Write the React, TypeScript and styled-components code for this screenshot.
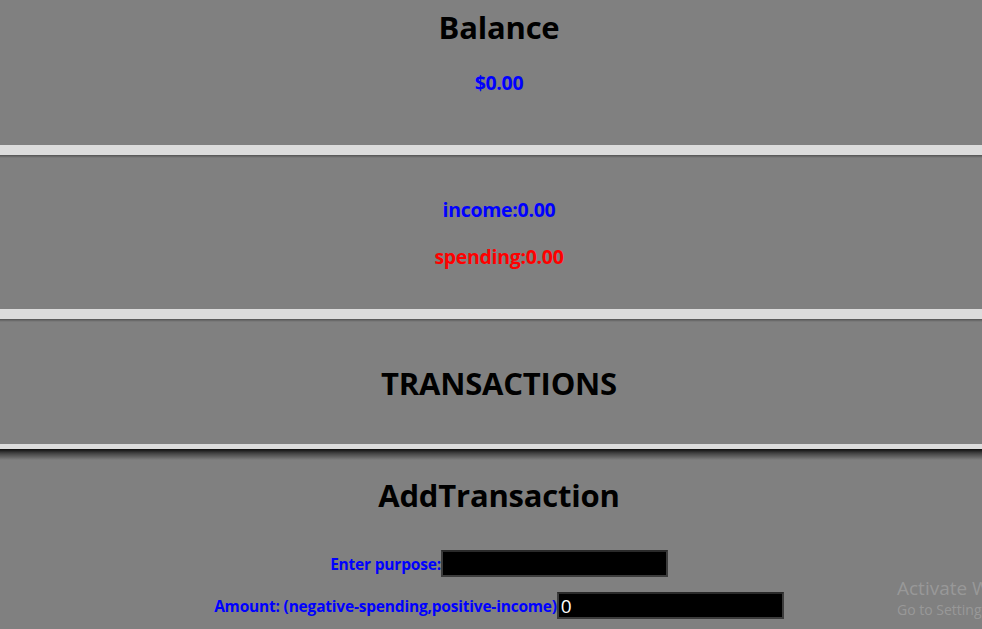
import React from "react";
import styled, { createGlobalStyle } from "styled-components";

const GlobalStyle = createGlobalStyle`
  html, body {
    margin: 0;
    padding: 0;
    background: #dcdcdc;
    font-family: "Open Sans", "Noto Sans", sans-serif;
  }
`;

const Page = styled.main`
  display: flex;
  flex-direction: column;
  gap: 10px;
  min-height: 629px;
  overflow: hidden;
  position: relative;
`;

const Panel = styled.section<{ $height: number; $shadow?: "soft" | "hard" }>`
  height: ${(p) => p.$height}px;
  box-sizing: border-box;
  padding-left: 16px;
  text-align: center;
  display: flex;
  flex-direction: column;
  align-items: center;
  background: ${(p) =>
    p.$shadow === "hard"
      ? "linear-gradient(to bottom, rgba(0,0,0,0.9) 0px, rgba(0,0,0,0.5) 4px, rgba(0,0,0,0) 11px), #808080"
      : p.$shadow === "soft"
      ? "linear-gradient(to bottom, rgba(0,0,0,0.35) 0px, rgba(0,0,0,0) 3px), #808080"
      : "#808080"};
`;

const Title = styled.h1<{ $top: number }>`
  margin: ${(p) => p.$top}px 0 0;
  font-size: 31px;
  font-weight: 700;
  line-height: 44px;
  color: #000;
  letter-spacing: -0.2px;
`;

const Amount = styled.p<{ $color: string; $top: number }>`
  margin: ${(p) => p.$top}px 0 0;
  font-size: 19.5px;
  font-weight: 700;
  line-height: 26px;
  color: ${(p) => p.$color};
  letter-spacing: -0.3px;
`;

const Field = styled.label<{ $top: number }>`
  margin-top: ${(p) => p.$top}px;
  display: flex;
  align-items: center;
  font-size: 15.5px;
  font-weight: 700;
  color: #0000ff;
  letter-spacing: -0.2px;
`;

const Input = styled.input`
  width: 227px;
  height: 27px;
  box-sizing: border-box;
  background: #000;
  color: #fff;
  border: 2px solid #3c3c3c;
  border-top-color: #2a2a2a;
  font-family: "Open Sans", sans-serif;
  font-size: 19px;
  padding: 0 2px;
  outline: none;
`;

const Watermark = styled.div`
  position: absolute;
  left: 897px;
  top: 579px;
  color: rgba(170, 170, 170, 0.6);
  font-family: "Open Sans", sans-serif;
  white-space: nowrap;
  line-height: 1;
`;

const WatermarkBig = styled.div`
  font-size: 19px;
`;

const WatermarkSmall = styled.div`
  font-size: 14px;
  margin-top: 5px;
`;

const App: React.FC = () => {
  return (
    <>
      <GlobalStyle />
      <Page>
        <Panel $height={145}>
          <Title $top={5}>Balance</Title>
          <Amount $color="#0000ff" $top={21}>
            $0.00
          </Amount>
        </Panel>
        <Panel $height={154} $shadow="soft">
          <Amount $color="#0000ff" $top={42}>
            income:0.00
          </Amount>
          <Amount $color="#ff0000" $top={21}>
            spending:0.00
          </Amount>
        </Panel>
        <Panel $height={125} $shadow="soft">
          <Title $top={42}>TRANSACTIONS</Title>
        </Panel>
        <Panel $height={185} $shadow="hard" style={{ marginTop: -5 }}>
          <Title $top={24}>AddTransaction</Title>
          <Field $top={33}>
            Enter purpose:
            <Input type="text" />
          </Field>
          <Field $top={15}>
            Amount: (negative-spending,positive-income)
            <Input type="number" defaultValue={0} />
          </Field>
        </Panel>
        <Watermark>
          <WatermarkBig>Activate Windows</WatermarkBig>
          <WatermarkSmall>Go to Settings to activate Windows.</WatermarkSmall>
        </Watermark>
      </Page>
    </>
  );
};

export default App;
